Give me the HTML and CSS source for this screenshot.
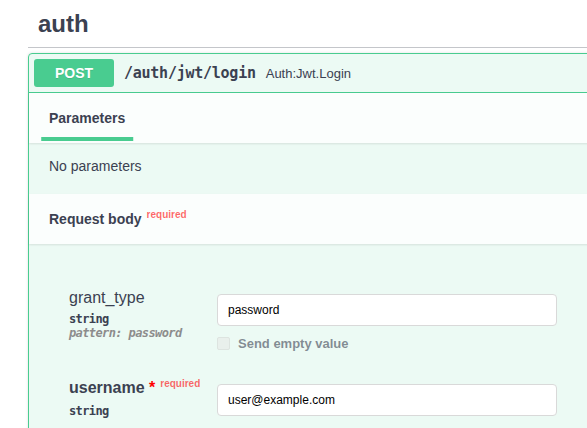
FILE: index.html
```html
<!DOCTYPE html>
<html lang="en">
<head>
<meta charset="utf-8">
<title>auth</title>
<link rel="stylesheet" href="styles.css">
</head>
<body>
<div class="page">
  <div class="tag"><h3>auth</h3></div>
  <div class="opblock">
    <div class="summary">
      <span class="method">POST</span>
      <span class="path">/auth/jwt/login</span>
      <span class="desc">Auth:Jwt.Login</span>
    </div>
    <div class="section-header"><h4 class="tab">Parameters</h4></div>
    <div class="no-params">No parameters</div>
    <div class="section-header"><h4 class="title">Request body<span class="req">required</span></h4></div>
    <div class="form">
      <div class="param">
        <div class="pcol">
          <div class="pname">grant_type</div>
          <div class="ptype">string</div>
          <div class="pext">pattern: password</div>
        </div>
        <div class="vcol">
          <input class="field" type="text" value="password">
          <label class="empty"><span class="cb"></span>Send empty value</label>
        </div>
      </div>
      <div class="param second">
        <div class="pcol">
          <div class="pname required">username<span class="star">&nbsp;*</span><span class="req">required</span></div>
          <div class="ptype">string</div>
        </div>
        <div class="vcol">
          <input class="field" type="text" value="user@example.com">
        </div>
      </div>
    </div>
  </div>
</div>
</body>
</html>
```
FILE: styles.css
```css
html, body {
  margin: 0;
  padding: 0;
  overflow: hidden;
  background: #fff;
  font-family: "Liberation Sans", Arial, sans-serif;
  color: #3b4151;
}

.page {
  width: 720px;
  margin-left: 28px;
}

.tag {
  display: flex;
  align-items: center;
  padding: 10px 20px 10px 10px;
  border-bottom: 1px solid rgba(59, 65, 81, 0.3);
  margin-bottom: 5px;
}

.tag h3 {
  margin: 0;
  font-size: 24px;
  line-height: 27px;
  font-weight: 700;
}

.opblock {
  border: 1px solid #49cc90;
  border-radius: 4px;
  background: rgba(73, 204, 144, 0.1);
  box-shadow: 0 0 3px rgba(0, 0, 0, 0.12);
}

.summary {
  display: flex;
  align-items: center;
  padding: 5px;
  border-bottom: 1px solid #49cc90;
}

.method {
  min-width: 80px;
  height: 28px;
  display: flex;
  align-items: center;
  justify-content: center;
  background: #49cc90;
  color: #fff;
  font-weight: 700;
  font-size: 14px;
  border-radius: 3px;
  text-shadow: 0 1px 0 rgba(0, 0, 0, 0.1);
}

.path {
  padding: 0 10px;
  font-family: "DejaVu Sans Mono", monospace;
  font-weight: 700;
  font-size: 15px;
  letter-spacing: -0.25px;
  color: #3b4151;
}

.desc {
  font-size: 13px;
}

.section-header {
  min-height: 50px;
  box-sizing: border-box;
  padding: 8px 20px;
  display: flex;
  align-items: center;
  background: rgba(255, 255, 255, 0.8);
  box-shadow: 0 1px 2px rgba(0, 0, 0, 0.1);
}

.section-header h4 {
  margin: 0;
  font-size: 14px;
  line-height: 16px;
  font-weight: 700;
}

.section-header .title {
  padding-top: 2px;
}

.tab {
  position: relative;
}

.tab::after {
  content: "";
  position: absolute;
  left: 50%;
  bottom: -15px;
  width: 120%;
  height: 4px;
  transform: translateX(-50%);
  background: #49cc90;
}

.req {
  font-size: 10px;
  font-weight: 700;
  color: rgba(255, 0, 0, 0.6);
  padding: 5px;
  position: relative;
  top: -6px;
}

.no-params {
  padding: 13px 20px 17px;
  font-size: 14px;
  line-height: 21px;
}

.form {
  padding: 45px 20px 30px 40px;
}

.param {
  display: flex;
  align-items: flex-start;
}

.param.second {
  margin-top: 28px;
}

.pcol {
  width: 148px;
  flex: none;
}

.pname {
  font-size: 16px;
  line-height: 18px;
  white-space: nowrap;
}

.pname.required {
  font-weight: 700;
}

.star {
  color: red;
}

.ptype {
  margin-top: 5px;
  font-family: "DejaVu Sans Mono", monospace;
  font-weight: 700;
  font-size: 12px;
  line-height: 14px;
  letter-spacing: -0.6px;
}

.pext {
  font-family: "DejaVu Sans Mono", monospace;
  font-weight: 700;
  font-style: italic;
  font-size: 12px;
  line-height: 14px;
  letter-spacing: -0.6px;
  color: #8c8c8c;
}

.vcol {
  width: 340px;
  display: flex;
  flex-direction: column;
}

.field {
  box-sizing: border-box;
  width: 340px;
  height: 32px;
  margin: 5px 0 0;
  padding: 8px 10px;
  border: 1px solid #d9d9d9;
  border-radius: 4px;
  background: #fff;
  font-family: "Liberation Sans", Arial, sans-serif;
  font-size: 12px;
  color: #000;
  outline: none;
}

.empty {
  display: flex;
  align-items: center;
  margin-top: 10px;
  height: 15px;
  font-size: 13px;
  font-weight: 700;
  color: rgba(59, 65, 81, 0.6);
}

.cb {
  width: 13px;
  height: 13px;
  box-sizing: border-box;
  border: 1px solid #dde4e0;
  border-radius: 2px;
  background: #e9f0ec;
  margin-right: 8px;
  flex: none;
}
```
